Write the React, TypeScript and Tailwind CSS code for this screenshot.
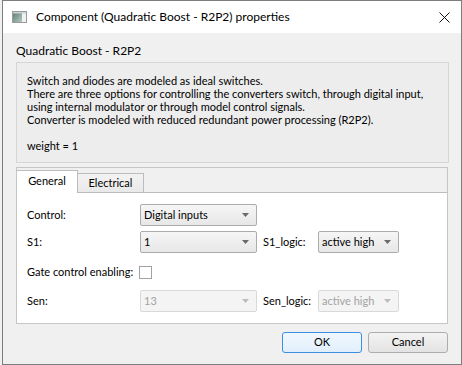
import clsx from "clsx";

const Arrow = ({ disabled }: { disabled?: boolean }) => (
  <svg width="7" height="4" viewBox="0 0 7 4">
    <polygon points="0,0 7,0 3.5,4" fill={disabled ? "#bdbdbd" : "#6a6a6a"} />
  </svg>
);

const Combo = ({ value, className, disabled }: { value: string; className: string; disabled?: boolean }) => (
  <div
    className={clsx(
      "flex h-[22px] items-center justify-between rounded-[2px] border pl-[3px] pr-[7px]",
      disabled
        ? "border-[#d9d9d9] bg-[#f4f4f4] text-[#a3a3a3]"
        : "border-[#acacac] bg-gradient-to-b from-[#f6f6f6] to-[#e7e7e7]",
      className
    )}
  >
    <span>{value}</span>
    <Arrow disabled={disabled} />
  </div>
);

const App = () => {
  return (
    <div className="h-[365px] w-[462px] bg-[#f0f0f0] font-['Lato','Liberation_Sans',sans-serif] text-[11px] text-black">
      <div className="ml-[2px] flex h-[365px] w-[460px] flex-col border border-[#7d7d7d]">
        {/* title bar */}
        <div className="flex h-[32px] items-center bg-white pl-[9px] pr-[11px]">
          <svg width="15" height="12" viewBox="0 0 15 12">
            <defs>
              <linearGradient id="ic" x1="0" y1="0" x2="1" y2="1">
                <stop offset="0" stopColor="#5d7a72" />
                <stop offset="1" stopColor="#b3cbc2" />
              </linearGradient>
            </defs>
            <rect x="0.5" y="0.5" width="14" height="11" fill="#eef2f3" stroke="#9a9a9a" />
            <rect x="1" y="1" width="9" height="10" fill="url(#ic)" />
            <rect x="1" y="1" width="13" height="1.5" fill="#c9d2d6" />
          </svg>
          <span className="ml-[9px] text-[12px]">Component (Quadratic Boost - R2P2) properties</span>
          <svg className="ml-auto" width="11" height="11" viewBox="0 0 11 11">
            <path d="M0.5 0.5 L10.5 10.5 M10.5 0.5 L0.5 10.5" stroke="#111" strokeWidth="1" />
          </svg>
        </div>

        <div className="flex flex-1 flex-col pl-[13px] pr-[12px]">
          <div className="mt-[10px] h-[16px] text-[12px] leading-[16px]">Quadratic Boost - R2P2</div>

          <div className="mt-[3px] h-[101px] border border-[#d6d6d6] bg-[#ededed] pl-[10px] pt-[11px] leading-[13px]">
            <div>Switch and diodes are modeled as ideal switches.</div>
            <div>There are three options for controlling the converters switch, through digital input,</div>
            <div>using internal modulator or through model control signals.</div>
            <div>Converter is modeled with reduced redundant power processing (R2P2).</div>
            <div className="h-[13px]" />
            <div>weight = 1</div>
          </div>

          {/* tab widget */}
          <div className="mr-[1px] mt-[4px] flex h-[157px] flex-col border border-[#c6c6c6]">
            <div className="flex h-[25px] items-end border-b border-[#bcbcbc]">
              <div className="-mb-[1px] flex h-[23px] w-[61px] items-center justify-center border-r border-t border-[#bcbcbc] bg-white pb-[1px]">
                General
              </div>
              <div className="flex h-[19px] w-[66px] items-center justify-center border-r border-t border-[#bcbcbc] bg-gradient-to-b from-[#f3f3f3] to-[#e9e9e9]">
                Electrical
              </div>
            </div>
            <div className="flex flex-1 flex-col bg-white pl-[10px] pt-[11px]">
              <div className="flex h-[22px] items-center">
                <span className="w-[113px]">Control:</span>
                <Combo value="Digital inputs" className="w-[117px]" />
              </div>
              <div className="mt-[5px] flex h-[22px] items-center">
                <span className="w-[113px]">S1:</span>
                <Combo value="1" className="w-[117px]" />
                <span className="ml-[6px] w-[55px]">S1_logic:</span>
                <Combo value="active high" className="w-[81px]" />
              </div>
              <div className="mt-[8px] flex h-[22px] items-center">
                <span className="w-[112px]">Gate control enabling:</span>
                <div className="h-[13px] w-[13px] border border-[#a2a2a2] bg-white" />
              </div>
              <div className="mt-[7px] flex h-[22px] items-center">
                <span className="w-[113px]">Sen:</span>
                <Combo value="13" className="w-[117px]" disabled />
                <span className="ml-[6px] w-[55px]">Sen_logic:</span>
                <Combo value="active high" className="w-[81px]" disabled />
              </div>
            </div>
          </div>

          <div className="mr-[1px] mt-[8px] flex justify-end gap-[6px]">
            <button className="h-[21px] w-[80px] rounded-[3px] border border-[#3d8ee0] bg-gradient-to-b from-[#f1f8fe] to-[#e1effb]">
              OK
            </button>
            <button className="h-[21px] w-[80px] rounded-[3px] border border-[#adadad] bg-gradient-to-b from-[#f3f3f3] to-[#e3e3e3]">
              Cancel
            </button>
          </div>
        </div>
      </div>
    </div>
  );
};

export default App;
